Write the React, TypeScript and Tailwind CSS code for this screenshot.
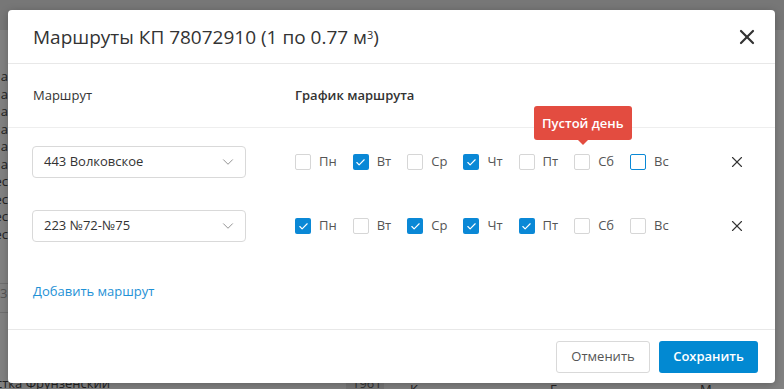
import { X, ChevronDown, Check } from "lucide-react"

const days = ["Пн", "Вт", "Ср", "Чт", "Пт", "Сб", "Вс"]

const routes = [
  { id: 1, name: "443 Волковское", checked: [false, true, false, true, false, false, false], focus: 6 },
  { id: 2, name: "223 №72-№75", checked: [true, false, true, true, true, false, false], focus: -1 },
]

const bgRows = ["а", "а", "а", "а", "а", "а", "ес", "ес", "ес", "ес"]

function DayBox({ label, checked, focus }: { label: string; checked: boolean; focus: boolean }) {
  return (
    <label className="flex items-center gap-2 mr-4">
      <span
        className={
          checked
            ? "flex h-4 w-4 items-center justify-center rounded-[2px] bg-[#0a88d6]"
            : focus
              ? "h-4 w-4 rounded-[2px] border border-[#0a88d6] bg-white"
              : "h-4 w-4 rounded-[2px] border border-[#d6d6d6] bg-white"
        }
      >
        {checked && <Check size={11} strokeWidth={2.5} className="text-white" />}
      </span>
      <span className="text-[13px] text-[#555]">{label}</span>
    </label>
  )
}

function App() {
  return (
    <div className="relative h-[389px] w-[784px] overflow-hidden bg-[#828282] font-['Open_Sans',sans-serif]">
      {/* page behind the overlay */}
      <div className="absolute inset-0">
        <div className="h-[30px] bg-[#777] pl-[415px] pt-[8px] text-[13px] leading-none text-[#3a3a3a]">78072910</div>
        <div className="pt-[38px] text-[13px] text-[#222]">
          {bgRows.map((r, i) => (
            <div key={i} className="h-[17.5px] w-[8px] overflow-hidden whitespace-nowrap leading-[17px]" style={{ direction: "rtl" }}>
              {r}
            </div>
          ))}
          <div className="mt-[40px] h-[30px] w-[8px] border-y border-[#6f6f6f] text-[#555]">3</div>
        </div>
        <div className="absolute left-0 top-[374px] flex w-full text-[13px] text-[#222]">
          <span className="-ml-[4px] w-[350px]">стка Фрунзенский</span>
          <span className="w-[38px] bg-[#777] px-[6px] text-[#333]">1961</span>
          <span className="ml-[26px] mt-[6px] w-[140px]">К</span>
          <span className="mt-[6px] w-[150px]">Г</span>
          <span className="mt-[6px]">М</span>
        </div>
      </div>

      {/* modal */}
      <div className="absolute left-[8px] top-[10px] flex h-[373px] w-[767px] flex-col rounded-[4px] bg-white text-[#333] shadow-[0_2px_8px_rgba(0,0,0,0.25)]">
        <div className="flex h-[54px] items-center justify-between border-b border-[#e8e8e8] pl-[25px] pr-[16px]">
          <h2 className="mt-[2px] text-[19px] leading-none text-[#333]">
            Маршруты КП 78072910 (1 по 0.77 м<sup className="text-[11px]">3</sup>)
          </h2>
          <X size={24} strokeWidth={2.2} className="text-[#333]" />
        </div>

        <div className="flex h-[64px] items-center border-b border-[#eee] text-[13px]">
          <div className="w-[287px] pl-[25px]">Маршрут</div>
          <div className="font-semibold">График маршрута</div>
        </div>

        <div className="flex flex-1 flex-col gap-8 pl-[24px] pt-[18px]">
          {routes.map((route) => (
            <div key={route.id} className="flex h-[32px] items-center">
              <div className="mr-[49px] flex h-[32px] w-[214px] items-center justify-between rounded-[4px] border border-[#d9d9d9] pl-[11px] pr-[8px] text-[13px] text-[#333]">
                {route.name}
                <ChevronDown size={18} strokeWidth={1.2} className="text-[#888]" />
              </div>
              <div className="relative flex w-[433px] items-center">
                {days.map((d, i) => (
                  <DayBox key={d} label={d} checked={route.checked[i]} focus={route.focus === i} />
                ))}
                {route.id === 1 && (
                  <div className="absolute left-[239px] top-[-46px] flex flex-col items-center">
                    <div className="rounded-[3px] bg-[#e34c40] px-[8px] py-[7px] text-[13px] font-semibold leading-[20px] text-white">
                      Пустой день
                    </div>
                    <div className="h-0 w-0 border-x-[5px] border-t-[5px] border-x-transparent border-t-[#e34c40]" />
                  </div>
                )}
              </div>
              <X size={18} strokeWidth={1.5} className="text-[#333]" />
            </div>
          ))}
          <div className="mt-[8px] pl-[1px] text-[13px] text-[#1e91d6]">Добавить маршрут</div>
        </div>

        <div className="flex h-[54px] items-center justify-end gap-[9px] border-t border-[#e8e8e8] pr-[17px]">
          <button type="button" className="h-[32px] w-[94px] rounded-[3px] border border-[#d9d9d9] bg-white text-[13px] text-[#555]">
            Отменить
          </button>
          <button type="button" className="h-[32px] w-[99px] rounded-[3px] bg-[#0289d2] text-[13px] font-semibold text-white">
            Сохранить
          </button>
        </div>
      </div>
    </div>
  )
}

export default App
